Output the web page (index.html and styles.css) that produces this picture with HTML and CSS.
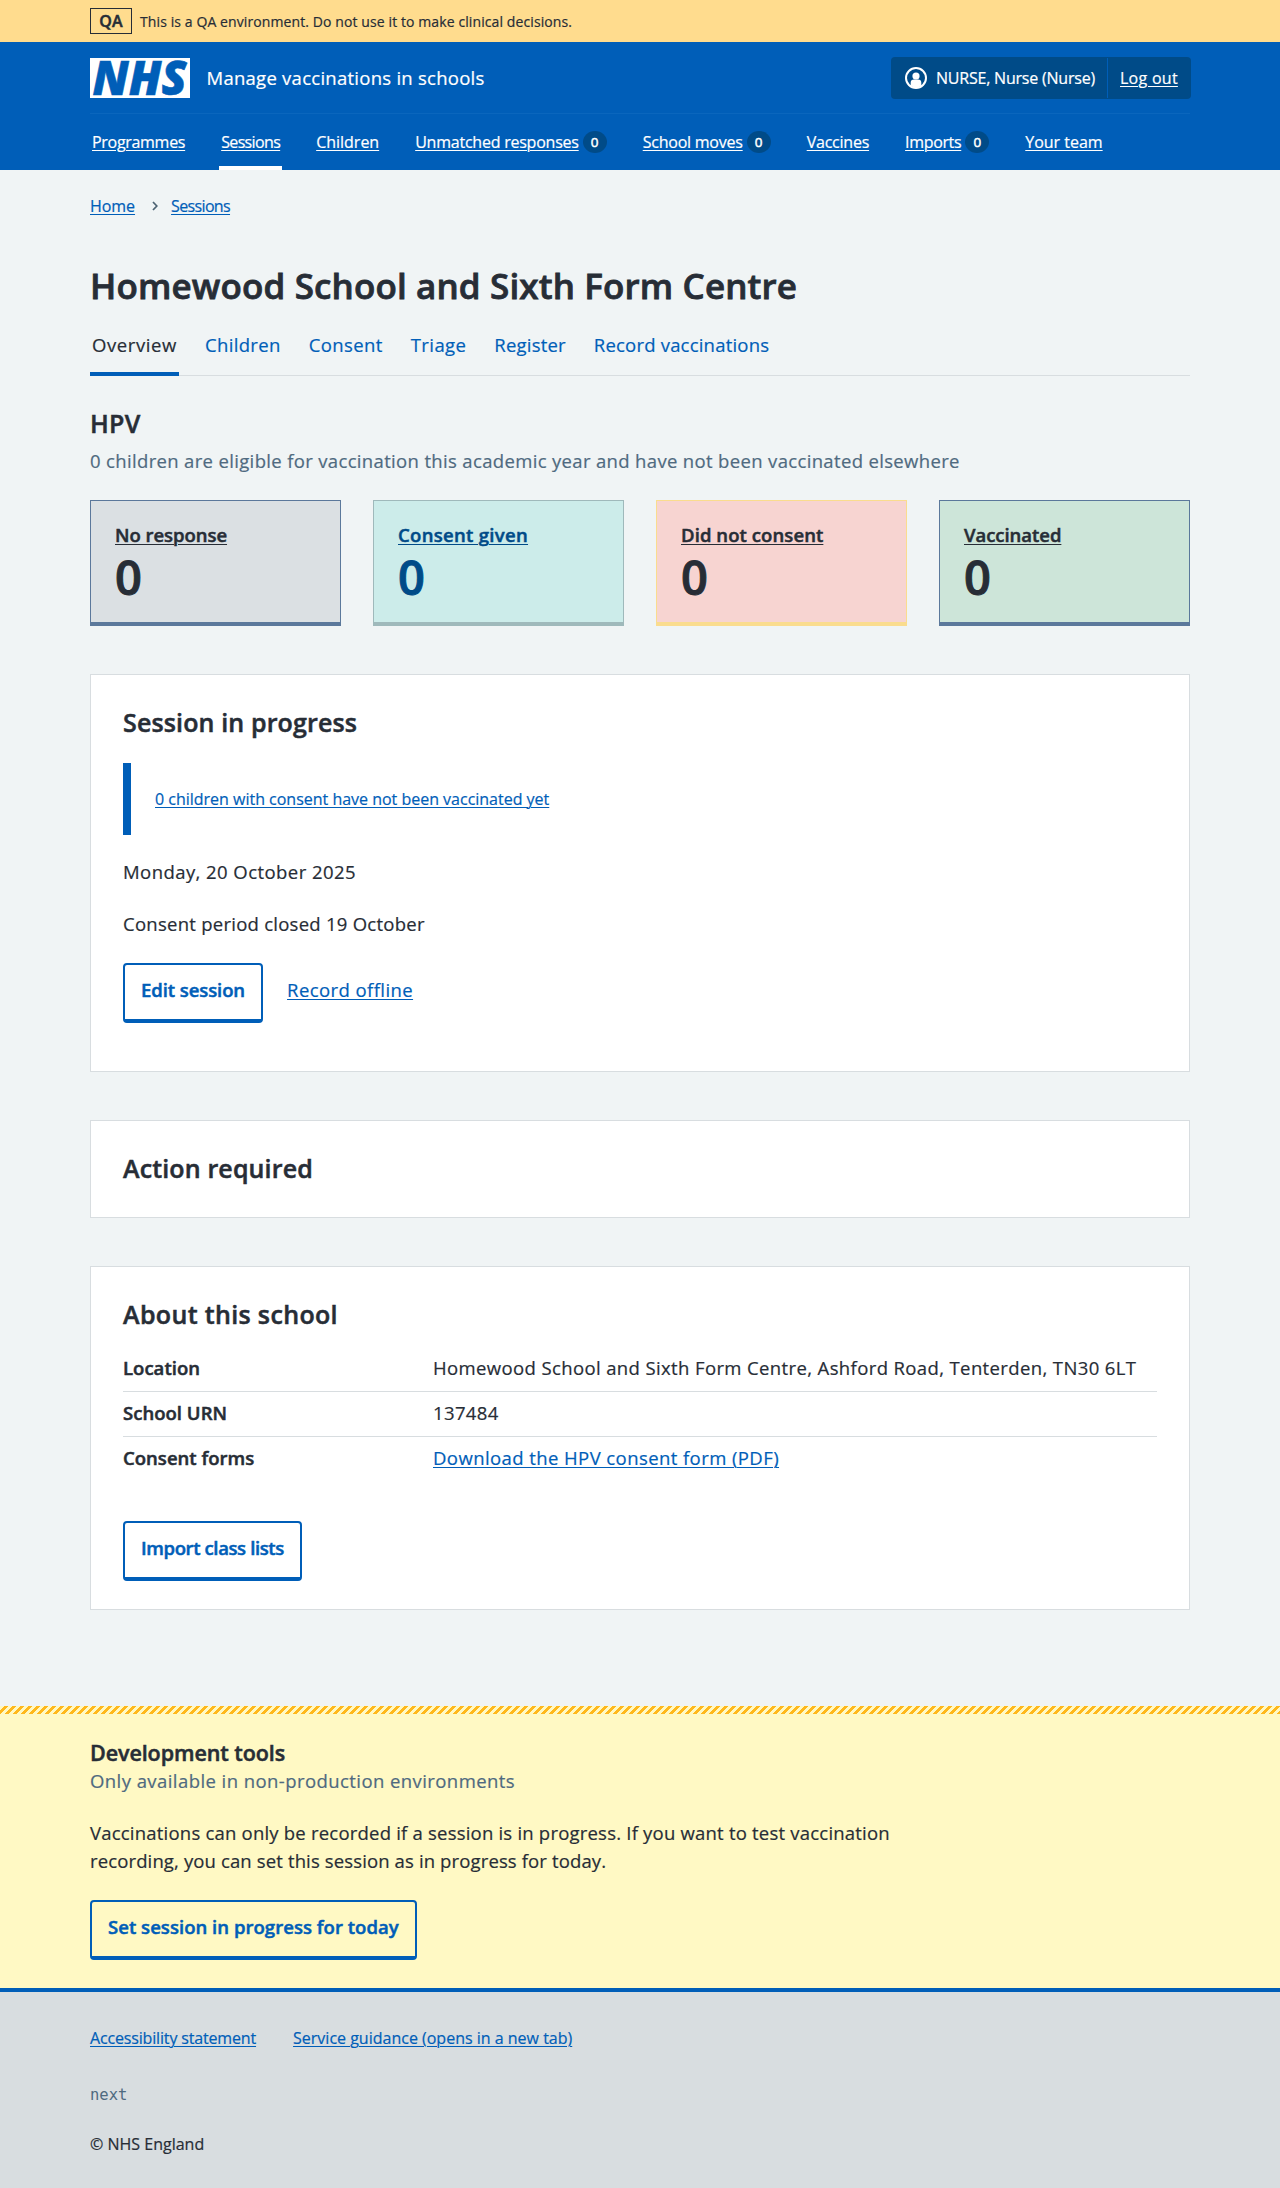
FILE: index.html
```html
<!DOCTYPE html>
<html lang="en">
<head>
<meta charset="utf-8">
<title>Homewood School and Sixth Form Centre – Manage vaccinations in schools</title>
<link rel="stylesheet" href="styles.css">
</head>
<body>
<div class="environment">
  <div class="container environment__inner">
    <strong class="environment__tag">QA</strong>
    <span class="environment__text">This is a QA environment. Do not use it to make clinical decisions.</span>
  </div>
</div>

<header class="header">
  <div class="container">
    <div class="header__top">
      <svg class="logo" width="100" height="40" viewBox="0 0 100 40" role="img" aria-label="NHS">
        <rect width="100" height="40" fill="#fff"/>
        <text class="logo__text" x="2.5" y="37" textLength="94" lengthAdjust="spacingAndGlyphs">NHS</text>
      </svg>
      <a class="header__service" href="#">Manage vaccinations in schools</a>
      <div class="account">
        <div class="account__user">
          <svg width="22" height="22" viewBox="0 0 22 22" aria-hidden="true">
            <circle cx="11" cy="11" r="10" fill="none" stroke="#fff" stroke-width="2"/>
            <circle cx="11" cy="9" r="3.6" fill="#fff"/>
            <path d="M5.7 18.5v-2.7a3.3 3.3 0 0 1 3.3-3.3h4a3.3 3.3 0 0 1 3.3 3.3v2.7A9.5 9.5 0 0 1 11 21a9.5 9.5 0 0 1-5.3-2.5z" fill="#fff"/>
          </svg>
          <span>NURSE, Nurse (Nurse)</span>
        </div>
        <div class="account__logout"><a href="#">Log out</a></div>
      </div>
    </div>
    <nav class="nav">
      <div class="nav__item"><a href="#">Programmes</a></div>
      <div class="nav__item nav__item--current"><a href="#">Sessions</a></div>
      <div class="nav__item"><a href="#">Children</a></div>
      <div class="nav__item"><a href="#">Unmatched responses</a><span class="count">0</span></div>
      <div class="nav__item"><a href="#">School moves</a><span class="count">0</span></div>
      <div class="nav__item"><a href="#">Vaccines</a></div>
      <div class="nav__item"><a href="#">Imports</a><span class="count">0</span></div>
      <div class="nav__item"><a href="#">Your team</a></div>
    </nav>
  </div>
</header>

<main class="container main">
  <nav class="breadcrumb">
    <a href="#">Home</a>
    <svg width="6" height="10" viewBox="0 0 6 10" aria-hidden="true"><path d="M1 1l3.8 4L1 9" fill="none" stroke="#4c6272" stroke-width="1.7"/></svg>
    <a href="#">Sessions</a>
  </nav>

  <h1 class="title">Homewood School and Sixth Form Centre</h1>

  <nav class="tabs">
    <a class="tabs__link tabs__link--current" href="#">Overview</a>
    <a class="tabs__link" href="#">Children</a>
    <a class="tabs__link" href="#">Consent</a>
    <a class="tabs__link" href="#">Triage</a>
    <a class="tabs__link" href="#">Register</a>
    <a class="tabs__link" href="#">Record vaccinations</a>
  </nav>

  <h2 class="heading heading--programme">HPV</h2>
  <p class="caption">0 children are eligible for vaccination this academic year and have not been vaccinated elsewhere</p>

  <div class="stats">
    <div class="stat stat--grey"><a class="stat__label" href="#">No response</a><div class="stat__value">0</div></div>
    <div class="stat stat--aqua"><a class="stat__label" href="#">Consent given</a><div class="stat__value">0</div></div>
    <div class="stat stat--red"><a class="stat__label" href="#">Did not consent</a><div class="stat__value">0</div></div>
    <div class="stat stat--green"><a class="stat__label" href="#">Vaccinated</a><div class="stat__value">0</div></div>
  </div>

  <section class="card card--session">
    <h2 class="heading">Session in progress</h2>
    <div class="inset"><a href="#">0 children with consent have not been vaccinated yet</a></div>
    <p class="text text--date">Monday, 20 October 2025</p>
    <p class="text">Consent period closed 19 October</p>
    <div class="actions">
      <a class="button" href="#">Edit session</a>
      <a class="actions__link" href="#">Record offline</a>
    </div>
  </section>

  <section class="card card--action">
    <h2 class="heading">Action required</h2>
  </section>

  <section class="card card--about">
    <h2 class="heading heading--about">About this school</h2>
    <dl class="summary">
      <div class="summary__row"><dt>Location</dt><dd>Homewood School and Sixth Form Centre, Ashford Road, Tenterden, TN30 6LT</dd></div>
      <div class="summary__row"><dt>School URN</dt><dd>137484</dd></div>
      <div class="summary__row"><dt>Consent forms</dt><dd><a href="#">Download the HPV consent form (PDF)</a></dd></div>
    </dl>
    <a class="button button--import" href="#">Import class lists</a>
  </section>
</main>

<section class="devtools">
  <div class="container">
    <h2 class="devtools__title">Development tools</h2>
    <p class="devtools__caption">Only available in non-production environments</p>
    <p class="devtools__text">Vaccinations can only be recorded if a session is in progress. If you want to test vaccination<br><span class="devtools__line">recording, you can set this session as in progress for today.</span></p>
    <a class="button button--today" href="#">Set session in progress for today</a>
  </div>
</section>

<footer class="footer">
  <div class="container">
    <div class="footer__links">
      <a class="footer__link--accessibility" href="#">Accessibility statement</a>
      <a href="#">Service guidance (opens in a new tab)</a>
    </div>
    <p class="footer__version">next</p>
    <p class="footer__copyright">© NHS England</p>
  </div>
</footer>
</body>
</html>
```
FILE: styles.css
```css
* { box-sizing: border-box; }

body {
  margin: 0;
  background: #f0f4f5;
  color: #272d36;
  font: 400 18.5px/28px "Open Sans", "Noto Sans", sans-serif;
  letter-spacing: 0.34px;
  -webkit-text-stroke: 0.2px currentcolor;
}

h1, h2, p, dl, dd { margin: 0; }

h1, h2, dt, .environment__tag, .stat, .button { -webkit-text-stroke-width: 0.5px; }

a {
  color: #005eb8;
  text-decoration: underline;
  text-decoration-thickness: 1px;
  text-underline-offset: 2px;
}

.container { width: 1100px; margin: 0 auto; }

/* Environment banner */
.environment { height: 42px; background: #ffdc8e; }
.environment__inner { display: flex; align-items: flex-start; gap: 8px; padding-top: 8px; }
.environment__tag {
  width: 42px;
  height: 26px;
  border: 1px solid #272d36;
  text-align: center;
  font-size: 16px;
  font-weight: 600;
  line-height: 25px;
  letter-spacing: 0.2px;
}
.environment__text { font-size: 14px; line-height: 27px; letter-spacing: 0.1px; }

/* Header */
.header { height: 128px; background: #005eb8; color: #fff; }
.header a { color: #fff; }
.header__top {
  display: flex;
  align-items: center;
  height: 72px;
  border-bottom: 1px solid #0a66bd;
}
.logo { overflow: visible; }
.logo__text {
  font: italic 800 47.5px "Open Sans", sans-serif;
  letter-spacing: 0;
  fill: #005eb8;
  stroke: #005eb8;
  stroke-width: 0.6px;
}
.header a.header__service {
  margin-left: 16.5px;
  text-decoration: none;
  letter-spacing: 0.26px;
}
.account {
  display: flex;
  align-items: center;
  height: 42px;
  margin: 0 -1px 0 auto;
  border-radius: 4px;
  background: #004b88;
  font-size: 16px;
  line-height: 24px;
  letter-spacing: -0.21px;
}
.account__user {
  display: flex;
  align-items: center;
  gap: 9px;
  width: 217px;
  height: 40px;
  padding-left: 14px;
  border-right: 1px solid #005eb8;
}
.account__logout { width: 83px; padding-left: 12px; letter-spacing: 0.27px; }

.nav { display: flex; gap: 32px; font-size: 16px; line-height: 24px; }
.nav__item {
  display: flex;
  height: 56px;
  padding: 16px 2px 0;
  letter-spacing: -0.23px;
}
.nav__item--current { border-bottom: 4px solid #fff; letter-spacing: -0.64px; }
.nav__item:nth-child(1) { letter-spacing: -0.3px; }
.nav__item:nth-child(3), .nav__item:nth-child(8) { letter-spacing: -0.01px; }
.nav__item:nth-child(7) { letter-spacing: -0.34px; }
.count {
  width: 24px;
  height: 22px;
  margin: 1px 0 0 4px;
  border-radius: 50%;
  background: #004b88;
  text-align: center;
  font-size: 13.5px;
  line-height: 23px;
  letter-spacing: 0;
  -webkit-text-stroke-width: 0.5px;
}

/* Page top */
.main { padding: 24px 0 96px; }
.breadcrumb {
  display: flex;
  align-items: center;
  font-size: 16px;
  line-height: 24px;
  letter-spacing: -0.05px;
}
.breadcrumb svg { margin: 0 13px 0 17px; }
.breadcrumb a:last-child { letter-spacing: -0.64px; }

.title {
  margin-top: 46px;
  font-size: 35px;
  font-weight: 600;
  line-height: 44px;
  letter-spacing: 0.14px;
  -webkit-text-stroke-width: 0.8px;
}

.tabs {
  display: flex;
  gap: 24px;
  height: 45px;
  margin-top: 23px;
  box-shadow: inset 0 -1px #d8dde0;
}
.tabs__link {
  height: 45px;
  padding: 0 2px;
  text-decoration: none;
  letter-spacing: 0.2px;
}
.tabs__link--current { border-bottom: 4px solid #005eb8; color: #272d36; letter-spacing: 0.6px; }
.tabs__link:nth-child(2) { letter-spacing: 0.34px; }
.tabs__link:nth-child(3) { letter-spacing: 0.4px; }
.tabs__link:nth-child(4) { letter-spacing: 0.4px; }

.heading { font-size: 25px; font-weight: 600; line-height: 32px; letter-spacing: 0.14px; }
.heading--programme { margin-top: 31px; letter-spacing: 0.3px; }
.heading--about { letter-spacing: 0.35px; }
.caption { margin-top: 8px; color: #4f6a80; }

/* Statistics */
.stats { display: grid; grid-template-columns: repeat(4, 251px); gap: 32px; margin-top: 25px; }
.stat {
  height: 126px;
  padding: 20px 24px 0;
  border: 1px solid;
  border-bottom-width: 4px;
  font-weight: 600;
}
.stat__label { display: block; width: max-content; color: inherit; letter-spacing: -0.04px; }
.stat__value { font-size: 47px; line-height: 56px; letter-spacing: 0; -webkit-text-stroke-width: 1px; }
.stat--grey { background: #dbe0e3; border-color: #5b789b; }
.stat--aqua { background: #ccecea; border-color: #9fb9bb; color: #004b88; }
.stat--red { background: #f7d4d1; border-color: #fadc8e; }
.stat--green { background: #cde5d9; border-color: #5b789b; }
.stat--aqua .stat__label { letter-spacing: 0.31px; }
.stat--red .stat__label { letter-spacing: 0.08px; }

/* Cards */
.card {
  margin-top: 48px;
  padding: 31px 32px 0;
  border: 1px solid #d8dde0;
  background: #fff;
}
.card--session { height: 398px; }
.card--action { height: 98px; }
.card--about { height: 344px; }

.inset {
  height: 72px;
  margin-top: 25px;
  padding: 24px;
  border-left: 8px solid #005eb8;
  font-size: 16px;
  line-height: 24px;
  letter-spacing: -0.01px;
}
.text { margin-top: 24px; letter-spacing: 0.26px; }
.text--date { margin-top: 23px; letter-spacing: 0.44px; }

.actions { display: flex; align-items: flex-start; gap: 24px; margin-top: 25px; }
.actions__link { padding-top: 13px; letter-spacing: 0.42px; }

.button {
  display: block;
  width: max-content;
  height: 60px;
  padding: 11px 16px 0;
  border: 2px solid #005eb8;
  border-bottom-width: 4px;
  border-radius: 4px;
  font-weight: 600;
  text-decoration: none;
  letter-spacing: -0.08px;
}
.button--import { margin-top: 39px; letter-spacing: -0.38px; }

.summary { margin-top: 17px; }
.summary__row {
  display: grid;
  grid-template-columns: 310px 1fr;
  padding: 7px 0 9px;
  border-bottom: 1px solid #d8dde0;
}
.summary__row:last-child { border-bottom-color: transparent; }
.summary dt { font-weight: 600; letter-spacing: 0.03px; }
.summary dd { letter-spacing: 0.38px; }
.summary dd a { letter-spacing: 0.42px; }

/* Development tools */
.devtools {
  height: 282px;
  padding-top: 33px;
  background:
    linear-gradient(135deg, #fff9c4 25%, #ffb81c 25% 50%, #fff9c4 50% 75%, #ffb81c 75%) 0 0 / 8px 8px repeat-x,
    #fff9c4;
}
.devtools__title { font-size: 21.5px; font-weight: 600; line-height: 28px; letter-spacing: -0.08px; }
.devtools__caption { color: #4f6a80; letter-spacing: 0.43px; }
.devtools__text { margin: 24px 0 25px; letter-spacing: 0.21px; }
.devtools__line { letter-spacing: 0.13px; }
.button--today { letter-spacing: 0.04px; }

/* Footer */
.footer {
  height: 200px;
  padding-top: 34px;
  border-top: 4px solid #005eb8;
  background: #d8dde0;
  font-size: 16px;
  line-height: 24px;
  letter-spacing: 0;
}
.footer__links { display: flex; gap: 37px; }
.footer__link--accessibility { letter-spacing: -0.16px; }
.footer__version {
  margin-top: 33px;
  color: #4f6a80;
  font-family: "DejaVu Sans Mono", monospace;
  font-size: 15.5px;
  -webkit-text-stroke-width: 0;
}
.footer__copyright { margin-top: 25px; }
```
